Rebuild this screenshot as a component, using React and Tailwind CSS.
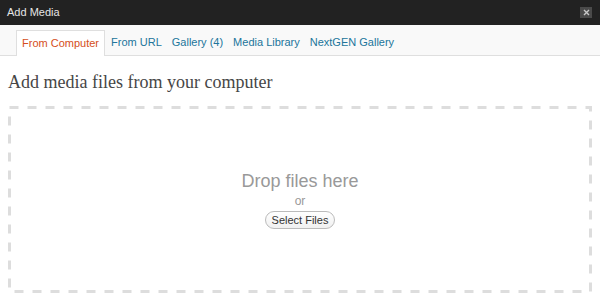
export default function App() {
  const tabs = ["From URL", "Gallery (4)", "Media Library", "NextGEN Gallery"];
  return (
    <div className="w-[600px] h-[299px] bg-white flex flex-col overflow-hidden" style={{ fontFamily: '"Liberation Sans", Arial, sans-serif' }}>
      <div className="h-[25px] bg-[#222222] flex items-center justify-between pl-[7px] pr-[8px] shrink-0">
        <span className="text-[11px] text-[#e5e5e5]">Add Media</span>
        <div className="w-[12px] h-[11px] bg-[#4a4a4a] flex items-center justify-center">
          <svg width="7" height="7" viewBox="0 0 7 7"><path d="M1 1L6 6M6 1L1 6" stroke="#c8c8c8" strokeWidth="1.4" /></svg>
        </div>
      </div>
      <div className="h-[31px] bg-[#f9f9f9] border-b border-[#dfdfdf] flex items-end pl-[16px] shrink-0">
        <div className="h-[26px] bg-white border border-b-0 border-[#dfdfdf] px-[5px] flex items-center text-[11px] text-[#d54e21] -mb-px">From Computer</div>
        <div className="flex h-[26px] items-center pl-[1px]">
          {tabs.map((t) => (
            <span key={t} className="px-[5px] text-[11px] text-[#21759b]">{t}</span>
          ))}
        </div>
      </div>
      <div className="px-[8px] pt-[15px] pb-[7px] flex flex-col flex-1">
        <h1 className="text-[18px] text-[#464646] leading-[22px]" style={{ fontFamily: 'Georgia, "Liberation Serif", serif' }}>Add media files from your computer</h1>
        <div className="relative mt-[13px] h-[187px] flex flex-col items-center pt-[65px]">
          <svg className="absolute inset-0" width="584" height="187" viewBox="0 0 584 187">
            <rect x="1.5" y="1.5" width="581" height="184" fill="none" stroke="#dddddd" strokeWidth="3" strokeDasharray="9 9" />
          </svg>
          <div className="text-[18px] text-[#999999] leading-[20px]">Drop files here</div>
          <div className="text-[12px] text-[#999999] mt-[3px] leading-[14px]">or</div>
          <button className="mt-[3px] h-[18px] px-[6px] rounded-full border border-[#bbbbbb] bg-gradient-to-b from-white to-[#f0f0f0] text-[11px] text-[#333333] leading-none">Select Files</button>
        </div>
      </div>
    </div>
  );
}
